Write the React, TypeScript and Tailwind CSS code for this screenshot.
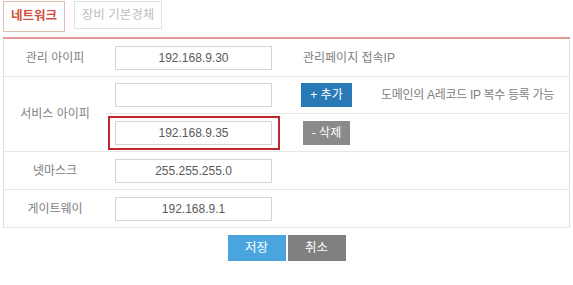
import React from "react";

const font = { fontFamily: '"Liberation Sans", "Noto Sans CJK KR", sans-serif' };

function Field({ value, highlight }: { value: string; highlight?: boolean }) {
  return (
    <div className="relative w-[157px] h-[24px] shrink-0">
      <div className="w-full h-full border border-[#d4d4d4] bg-white flex items-center justify-center text-[12px] text-[#5a5a5a]">
        {value}
      </div>
      {highlight && (
        <div className="absolute -left-[7px] -right-[8px] -top-[5px] -bottom-[5px] border-2 border-[#c0262c]" />
      )}
    </div>
  );
}

function Label({ children }: { children: React.ReactNode }) {
  return (
    <div className="w-[102px] shrink-0 flex items-center justify-center text-[12px] text-[#808080]">
      {children}
    </div>
  );
}

export default function App() {
  return (
    <div className="w-[573px] h-[285px] bg-white overflow-hidden" style={font}>
      <div className="h-[37px] flex items-start gap-[9px] pl-[3px] pt-[1px]">
        <div className="w-[62px] h-[31px] border border-[#e0bcb3] flex items-center justify-center text-[12.5px] font-bold text-[#d0503f]">
          네트워크
        </div>
        <div className="w-[88px] h-[28px] border border-[#e2e2e2] flex items-center justify-center text-[12.5px] text-[#bdbdbd]">
          장비 기본경체
        </div>
      </div>
      <div className="ml-[3px] w-[567px] h-[2px] bg-[#e59a98]" />
      <div className="ml-[3px] w-[567px] border-l border-r border-[#dedede]">
        <div className="h-[38px] flex items-center border-b border-[#e6e6e6]">
          <Label>관리 아이피</Label>
          <div className="pl-[9px] flex items-center">
            <Field value="192.168.9.30" />
            <span className="ml-[31px] text-[12px] text-[#808080]">관리페이지 접속IP</span>
          </div>
        </div>
        <div className="flex border-b border-[#e6e6e6]">
          <Label>서비스 아이피</Label>
          <div className="flex-1 flex flex-col">
            <div className="h-[37px] flex items-center pl-[9px] border-b border-[#e6e6e6]">
              <Field value="" />
              <div className="ml-[29px] w-[51px] h-[24px] bg-[#2a7ab8] text-white text-[12px] flex items-center justify-center">
                + 추가
              </div>
              <span className="ml-[29px] text-[12px] text-[#808080] tracking-[-0.3px]">
                도메인의 A레코드 IP 복수 등록 가능
              </span>
            </div>
            <div className="h-[37px] flex items-center pl-[9px]">
              <Field value="192.168.9.35" highlight />
              <div className="ml-[31px] w-[47px] h-[24px] bg-[#8a8a8a] text-white text-[12px] flex items-center justify-center">
                - 삭제
              </div>
            </div>
          </div>
        </div>
        <div className="h-[38px] flex items-center border-b border-[#e6e6e6]">
          <Label>넷마스크</Label>
          <div className="pl-[9px] flex items-center">
            <Field value="255.255.255.0" />
          </div>
        </div>
        <div className="h-[38px] flex items-center border-b border-[#e6e6e6]">
          <Label>게이트웨이</Label>
          <div className="pl-[9px] flex items-center">
            <Field value="192.168.9.1" />
          </div>
        </div>
      </div>
      <div className="mt-[7px] flex justify-center gap-[2px]">
        <div className="w-[58px] h-[26px] bg-[#4aa5df] text-white text-[12.5px] flex items-center justify-center">
          저장
        </div>
        <div className="w-[58px] h-[26px] bg-[#808080] text-white text-[12.5px] flex items-center justify-center">
          취소
        </div>
      </div>
    </div>
  );
}
